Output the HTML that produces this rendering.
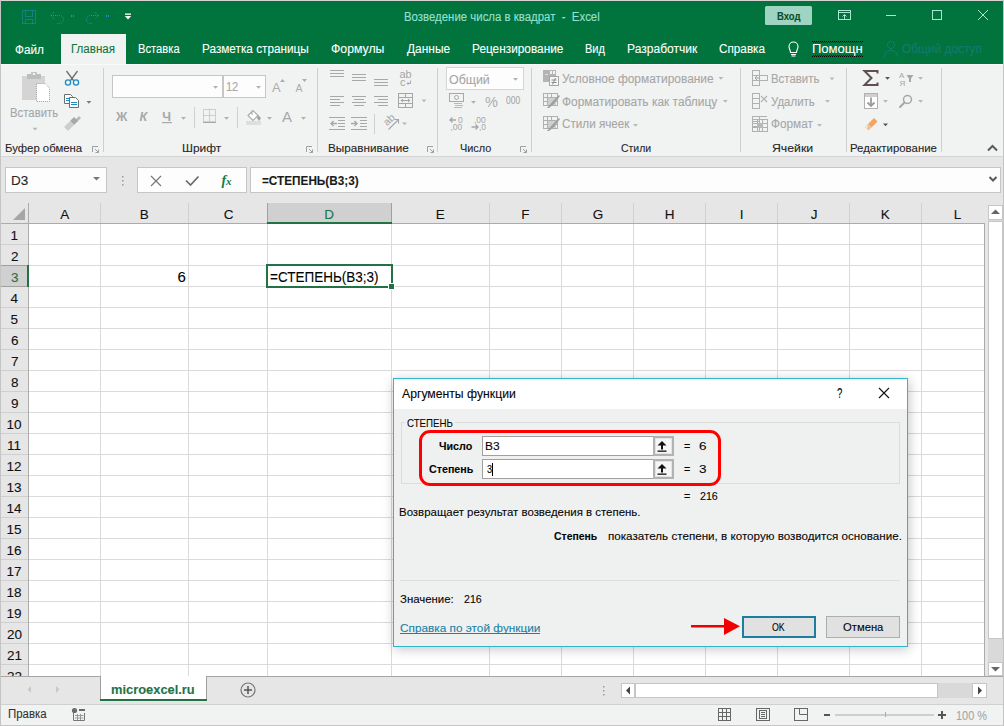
<!DOCTYPE html><html><head><meta charset="utf-8"><style>
html,body{margin:0;padding:0;width:1004px;height:726px;overflow:hidden;background:#e6e6e6}
#r{position:relative;width:1004px;height:726px;overflow:hidden;font-family:"Liberation Sans",sans-serif}
#r>div,#r>svg{position:absolute}
.t{white-space:pre;transform-origin:0 0;-webkit-text-stroke:0.1px currentColor}
</style></head><body><div id="r">
<div style="left:0px;top:0px;width:1004px;height:726px;background:#e6e6e6;"></div>
<div style="left:0px;top:0px;width:1004px;height:64px;background:#00743c;"></div>
<div style="left:61px;top:34px;width:65px;height:30px;background:#f1f3f2;"></div>
<div style="left:0px;top:64px;width:1004px;height:92px;background:#f1f3f2;"></div>
<div style="left:0px;top:64px;width:1004px;height:1px;background:#fafafa;"></div>
<div style="left:0px;top:156px;width:1004px;height:1px;background:#d4d4d4;"></div>
<div style="left:5px;top:167px;width:102px;height:26px;background:#fdfdfd;border:1px solid #c6c6c6;box-sizing:border-box"></div>
<div style="left:137px;top:167px;width:110px;height:26px;background:#fdfdfd;border:1px solid #c6c6c6;box-sizing:border-box"></div>
<div style="left:250px;top:167px;width:751px;height:26px;background:#fdfdfd;border:1px solid #c6c6c6;box-sizing:border-box"></div>
<div style="left:29px;top:224px;width:955px;height:452px;background:#ffffff;"></div>
<svg style="left:0px;top:0px;" width="1004" height="726" viewBox="0 0 1004 726"><rect x="100" y="224" width="1" height="452" fill="#dadada"/><rect x="100" y="203" width="1" height="20" fill="#d0d0d0"/><rect x="188" y="224" width="1" height="452" fill="#dadada"/><rect x="188" y="203" width="1" height="20" fill="#d0d0d0"/><rect x="267" y="224" width="1" height="452" fill="#dadada"/><rect x="267" y="203" width="1" height="20" fill="#d0d0d0"/><rect x="391" y="224" width="1" height="452" fill="#dadada"/><rect x="391" y="203" width="1" height="20" fill="#d0d0d0"/><rect x="489" y="224" width="1" height="452" fill="#dadada"/><rect x="489" y="203" width="1" height="20" fill="#d0d0d0"/><rect x="561" y="224" width="1" height="452" fill="#dadada"/><rect x="561" y="203" width="1" height="20" fill="#d0d0d0"/><rect x="633" y="224" width="1" height="452" fill="#dadada"/><rect x="633" y="203" width="1" height="20" fill="#d0d0d0"/><rect x="705" y="224" width="1" height="452" fill="#dadada"/><rect x="705" y="203" width="1" height="20" fill="#d0d0d0"/><rect x="777" y="224" width="1" height="452" fill="#dadada"/><rect x="777" y="203" width="1" height="20" fill="#d0d0d0"/><rect x="849" y="224" width="1" height="452" fill="#dadada"/><rect x="849" y="203" width="1" height="20" fill="#d0d0d0"/><rect x="921" y="224" width="1" height="452" fill="#dadada"/><rect x="921" y="203" width="1" height="20" fill="#d0d0d0"/><rect x="29" y="244" width="955" height="1" fill="#dadada"/><rect x="1" y="244" width="27" height="1" fill="#cfcfcf"/><rect x="29" y="265" width="955" height="1" fill="#dadada"/><rect x="1" y="265" width="27" height="1" fill="#cfcfcf"/><rect x="29" y="286" width="955" height="1" fill="#dadada"/><rect x="1" y="286" width="27" height="1" fill="#cfcfcf"/><rect x="29" y="307" width="955" height="1" fill="#dadada"/><rect x="1" y="307" width="27" height="1" fill="#cfcfcf"/><rect x="29" y="328" width="955" height="1" fill="#dadada"/><rect x="1" y="328" width="27" height="1" fill="#cfcfcf"/><rect x="29" y="349" width="955" height="1" fill="#dadada"/><rect x="1" y="349" width="27" height="1" fill="#cfcfcf"/><rect x="29" y="370" width="955" height="1" fill="#dadada"/><rect x="1" y="370" width="27" height="1" fill="#cfcfcf"/><rect x="29" y="391" width="955" height="1" fill="#dadada"/><rect x="1" y="391" width="27" height="1" fill="#cfcfcf"/><rect x="29" y="412" width="955" height="1" fill="#dadada"/><rect x="1" y="412" width="27" height="1" fill="#cfcfcf"/><rect x="29" y="433" width="955" height="1" fill="#dadada"/><rect x="1" y="433" width="27" height="1" fill="#cfcfcf"/><rect x="29" y="454" width="955" height="1" fill="#dadada"/><rect x="1" y="454" width="27" height="1" fill="#cfcfcf"/><rect x="29" y="475" width="955" height="1" fill="#dadada"/><rect x="1" y="475" width="27" height="1" fill="#cfcfcf"/><rect x="29" y="496" width="955" height="1" fill="#dadada"/><rect x="1" y="496" width="27" height="1" fill="#cfcfcf"/><rect x="29" y="517" width="955" height="1" fill="#dadada"/><rect x="1" y="517" width="27" height="1" fill="#cfcfcf"/><rect x="29" y="538" width="955" height="1" fill="#dadada"/><rect x="1" y="538" width="27" height="1" fill="#cfcfcf"/><rect x="29" y="559" width="955" height="1" fill="#dadada"/><rect x="1" y="559" width="27" height="1" fill="#cfcfcf"/><rect x="29" y="580" width="955" height="1" fill="#dadada"/><rect x="1" y="580" width="27" height="1" fill="#cfcfcf"/><rect x="29" y="601" width="955" height="1" fill="#dadada"/><rect x="1" y="601" width="27" height="1" fill="#cfcfcf"/><rect x="29" y="622" width="955" height="1" fill="#dadada"/><rect x="1" y="622" width="27" height="1" fill="#cfcfcf"/><rect x="29" y="643" width="955" height="1" fill="#dadada"/><rect x="1" y="643" width="27" height="1" fill="#cfcfcf"/><rect x="29" y="664" width="955" height="1" fill="#dadada"/><rect x="1" y="664" width="27" height="1" fill="#cfcfcf"/><rect x="1" y="223" width="983" height="1" fill="#ababab"/><rect x="28" y="203" width="1" height="473" fill="#ababab"/><rect x="984" y="223" width="1" height="453" fill="#ababab"/><rect x="268" y="203" width="123" height="20" fill="#d0d0d0"/><rect x="267" y="203" width="1" height="20" fill="#a0a0a0"/><rect x="391" y="203" width="1" height="20" fill="#a0a0a0"/><rect x="267" y="222" width="125" height="2" fill="#217346"/><rect x="1" y="266" width="26" height="20" fill="#d0d0d0"/><rect x="1" y="265" width="27" height="1" fill="#a0a0a0"/><rect x="1" y="286" width="27" height="1" fill="#a0a0a0"/><rect x="27" y="265" width="2" height="22" fill="#217346"/><polygon points="25,208 25,220 13,220" fill="#a6a6a6"/><rect x="267" y="265" width="125" height="22" fill="none" stroke="#217346" stroke-width="2"/><rect x="388" y="283" width="7" height="7" fill="#fff"/><rect x="389" y="284" width="5" height="5" fill="#217346"/></svg>
<div style="left:988px;top:205px;width:15px;height:471px;background:#d9d9d9;"></div>
<div style="left:988px;top:205px;width:15px;height:15px;background:#fff;border:1px solid #c6c6c6;box-sizing:border-box"></div>
<div style="left:988px;top:221px;width:15px;height:418px;background:#fff;border:1px solid #c6c6c6;box-sizing:border-box"></div>
<div style="left:988px;top:662px;width:15px;height:14px;background:#fff;border:1px solid #c6c6c6;box-sizing:border-box"></div>
<svg style="left:988px;top:205px;" width="15" height="15" viewBox="0 0 15 15"><polygon points="3,9 12,9 7.5,4.5" fill="#666"/></svg>
<svg style="left:988px;top:662px;" width="15" height="14" viewBox="0 0 15 14"><polygon points="3,5 12,5 7.5,9.5" fill="#666"/></svg>
<div style="left:1px;top:676px;width:1002px;height:1px;background:#a6a6a6;"></div>
<div style="left:100px;top:676px;width:107px;height:23px;background:#ffffff;border-left:1px solid #a0a0a0;border-right:1px solid #a0a0a0;box-sizing:border-box"></div>
<div style="left:100px;top:699px;width:107px;height:2px;background:#217346;"></div>
<div style="left:1px;top:704px;width:1002px;height:1px;background:#d0d0d0;"></div>
<div style="left:1px;top:705px;width:1002px;height:20px;background:#f1f3f2;"></div>
<div style="left:0px;top:725px;width:1004px;height:1px;background:#c6c6c6;"></div>
<div style="left:621px;top:683px;width:366px;height:15px;background:#d9d9d9;"></div>
<div style="left:621px;top:683px;width:14px;height:15px;background:#fff;border:1px solid #c6c6c6;box-sizing:border-box"></div>
<div style="left:635px;top:683px;width:303px;height:15px;background:#fff;border:1px solid #c6c6c6;box-sizing:border-box"></div>
<div style="left:972px;top:683px;width:15px;height:15px;background:#fff;border:1px solid #c6c6c6;box-sizing:border-box"></div>
<svg style="left:621px;top:683px;" width="14" height="15" viewBox="0 0 14 15"><polygon points="9,3.5 9,11.5 5,7.5" fill="#444"/></svg>
<svg style="left:972px;top:683px;" width="15" height="15" viewBox="0 0 15 15"><polygon points="6,3.5 6,11.5 10,7.5" fill="#444"/></svg>
<div style="left:0px;top:0px;width:1004px;height:1px;background:#d9d3d3;"></div>
<div style="left:0px;top:0px;width:1px;height:726px;background:#c4c4c4;"></div>
<div style="left:1003px;top:0px;width:1px;height:726px;background:#c4c4c4;"></div>
<svg style="left:0px;top:0px;" width="1004" height="726" viewBox="0 0 1004 726"><g fill="none" stroke="#2b8dbf" stroke-width="1" stroke-dasharray="1 1"><rect x="22.5" y="10.5" width="13" height="13"/><path d="M25.5 10.5V16.5H32.5V10.5"/><path d="M25.5 23.5V19.5H32.5V23.5"/><path d="M51 15.5H59.5A4 4 0 0 1 59.5 23.5H57"/><path d="M54 12L51 15.5L54 19"/><path d="M98 15.5H90.5A4 4 0 0 0 90.5 23.5H92"/><path d="M95 12L98.5 15.5L95 19"/></g><rect x="71" y="15" width="1" height="2" fill="#2b8dbf"/><rect x="73" y="15" width="1" height="2" fill="#2b8dbf"/><rect x="106" y="15" width="1" height="2" fill="#2b8dbf"/><rect x="108" y="15" width="1" height="2" fill="#2b8dbf"/><rect x="125" y="13.5" width="6" height="1.3" fill="#fff"/><polygon points="124.8,16 131.2,16 128,19.6" fill="#fff"/><rect x="765" y="6" width="47" height="19" rx="1.5" fill="#9fd3c2"/><g fill="none" stroke="#a8e6d2" stroke-width="1"><rect x="838.5" y="10.5" width="12" height="9"/><path d="M838.5 12.5H850.5"/><path d="M844.5 19.5V14.5M842.5 16.5L844.5 14.5L846.5 16.5"/><path d="M886 15.5H896"/><rect x="932.5" y="10.5" width="9" height="9"/><path d="M978 10L988 20M988 10L978 20"/></g><g fill="none" stroke="#fff" stroke-width="1.1"><path d="M790.5 52.5C790.5 50 789 49 789 46.5A4.5 4.5 0 0 1 798 46.5C798 49 796.5 50 796.5 52.5Z"/><path d="M791 54.5H796M791.5 56H795.5"/></g><path d="M812 41.5H863M812 56.5H863" fill="none" stroke="#000" stroke-width="1" stroke-dasharray="1 1"/><path d="M812 42.5H863M812 55.5H863" fill="none" stroke="#000" stroke-width="1" stroke-dasharray="1 1" stroke-dashoffset="1" opacity="0.5"/><g fill="none" stroke="#2088b8" stroke-width="1" stroke-dasharray="1 1"><circle cx="891" cy="45" r="3.5"/><path d="M884.5 56.5A6.5 6 0 0 1 897.5 56.5"/></g><rect x="22" y="76" width="23" height="24" fill="#d4d4d4"/><rect x="27" y="74" width="14" height="5" fill="#bdbdbd"/><rect x="31" y="72" width="6" height="3" fill="#c4c4c4"/><rect x="33" y="73" width="2" height="2" fill="#f1f3f2"/><path d="M36.5 83.5H45L49.5 88V101.5H36.5Z" fill="#fff" stroke="#a0a0a0" stroke-dasharray="1 1"/><polygon points="32.5,127.8 37.5,127.8 35.0,130.60000000000002" fill="#b8b8b8"/><g fill="none" stroke="#6e6e6e" stroke-width="1.3"><path d="M66.5 71L73.5 80.5M77.5 71L70.5 80.5"/></g><g fill="none" stroke="#1e8bc3" stroke-width="1.3"><circle cx="68" cy="82.5" r="2.6"/><circle cx="76" cy="82.5" r="2.6"/></g><g fill="#fff" stroke="#6e6e6e" stroke-width="1"><path d="M64.5 94.5H70.5L72.5 96.5V103.5H64.5Z"/><path d="M69.5 97.5H75.5L78.5 100.5V107.5H69.5Z"/></g><g stroke="#1e8bc3" stroke-width="1"><path d="M66 98.5H70M66 100.5H69M71 102.5H77M71 104.5H77"/></g><polygon points="86.4,101 91.4,101 88.9,103.8" fill="#7a7a7a"/><polygon points="75,120 79,116 81,118 77,122" fill="#b8b8b8"/><polygon points="70,121 74,117 78,121 74,125" fill="#a8a8a8"/><polygon points="64,127 70,121 74,125 68,131" fill="#cdcdcd"/><g fill="none" stroke="#a0a0a0" stroke-width="1"><path d="M92.5 152V146.5H98"/><path d="M95 149L98.5 152.5M98.5 149.5V152.5H95.5"/></g><g fill="none" stroke="#a0a0a0" stroke-width="1"><path d="M306.5 152V146.5H312"/><path d="M309 149L312.5 152.5M312.5 149.5V152.5H309.5"/></g><g fill="none" stroke="#a0a0a0" stroke-width="1"><path d="M427.5 152V146.5H433"/><path d="M430 149L433.5 152.5M433.5 149.5V152.5H430.5"/></g><g fill="none" stroke="#a0a0a0" stroke-width="1"><path d="M520.5 152V146.5H526"/><path d="M523 149L526.5 152.5M526.5 149.5V152.5H523.5"/></g><rect x="103" y="68" width="1" height="84" fill="#cfcfcf"/><rect x="317" y="68" width="1" height="84" fill="#cfcfcf"/><rect x="437" y="68" width="1" height="84" fill="#cfcfcf"/><rect x="531" y="68" width="1" height="84" fill="#cfcfcf"/><rect x="740" y="68" width="1" height="84" fill="#cfcfcf"/><rect x="846" y="68" width="1" height="84" fill="#cfcfcf"/><rect x="941" y="68" width="1" height="84" fill="#cfcfcf"/><rect x="112.5" y="75.5" width="110" height="22" fill="#fdfdfd" stroke="#c6c6c6"/><rect x="223.5" y="75.5" width="42" height="22" fill="#fdfdfd" stroke="#c6c6c6"/><polygon points="213,86 218,86 215.5,88.8" fill="#b0b0b0"/><polygon points="256,86 261,86 258.5,88.8" fill="#b0b0b0"/><text x="272" y="91.7" font-family="Liberation Sans" font-size="13" fill="#acacac">A</text><polygon points="280,82 285,82 282.5,79" fill="#acacac"/><text x="295.5" y="91.7" font-family="Liberation Sans" font-size="10.5" fill="#acacac">A</text><polygon points="302,79 307,79 304.5,82" fill="#acacac"/><text x="116" y="121" font-family="Liberation Sans" font-weight="bold" font-size="12.5" fill="#a8a8a8">Ж</text><text x="139.5" y="121" font-family="Liberation Sans" font-weight="bold" font-style="italic" font-size="12.5" fill="#a8a8a8">К</text><text x="162.3" y="121" font-family="Liberation Sans" font-weight="bold" font-size="12.5" fill="#a8a8a8">Ч</text><rect x="162" y="122" width="10" height="1.2" fill="#a8a8a8"/><polygon points="181,117 186,117 183.5,119.8" fill="#b0b0b0"/><rect x="194" y="107" width="1" height="21" fill="#d0d0d0"/><rect x="237" y="107" width="1" height="21" fill="#d0d0d0"/><g fill="none" stroke="#a8a8a8" stroke-dasharray="1 1"><rect x="203.5" y="109.5" width="12" height="12"/><path d="M209.5 109.5V121.5M203.5 115.5H215.5"/></g><rect x="203" y="122" width="13" height="1" fill="#a8a8a8"/><polygon points="224,117 229,117 226.5,119.8" fill="#b0b0b0"/><g fill="#fff" stroke="#a8a8a8" stroke-width="1.1"><path d="M252 110.5V115M248 115.5L253 110.5L258 115.5L253 120.5Z"/></g><polygon points="258,115 261,118 259,121 257,118" fill="#a0a0a0"/><rect x="246" y="121" width="15" height="4" fill="#dedede"/><polygon points="267,117 272,117 269.5,119.8" fill="#b0b0b0"/><text x="282" y="122" font-family="Liberation Sans" font-size="15" fill="#a8a8a8">A</text><polygon points="301,117 306,117 303.5,119.8" fill="#b0b0b0"/><rect x="330" y="70.00" width="14" height="1" fill="#a8a8a8"/><rect x="330" y="73.00" width="14" height="1" fill="#a8a8a8"/><rect x="330" y="76.00" width="14" height="1" fill="#a8a8a8"/><rect x="352" y="74.00" width="14" height="1" fill="#a8a8a8"/><rect x="352" y="77.00" width="14" height="1" fill="#a8a8a8"/><rect x="352" y="80.00" width="14" height="1" fill="#a8a8a8"/><rect x="374" y="79.00" width="14" height="1" fill="#a8a8a8"/><rect x="374" y="82.00" width="14" height="1" fill="#a8a8a8"/><rect x="374" y="85.00" width="14" height="1" fill="#a8a8a8"/><text x="399.5" y="78" font-family="Liberation Sans" font-size="11" fill="#a6a6a6">ab</text><text x="400" y="85.5" font-family="Liberation Sans" font-size="11" fill="#a6a6a6">c</text><path d="M407.5 83.5H410.5V80.5M408.5 82L407 83.5L408.5 85" fill="none" stroke="#a6a6a6"/><rect x="330" y="96.00" width="14" height="1" fill="#a8a8a8"/><rect x="330" y="99.00" width="10" height="1" fill="#a8a8a8"/><rect x="330" y="102.00" width="14" height="1" fill="#a8a8a8"/><rect x="330" y="105.00" width="10" height="1" fill="#a8a8a8"/><rect x="352" y="96.00" width="14" height="1" fill="#a8a8a8"/><rect x="354" y="99.00" width="10" height="1" fill="#a8a8a8"/><rect x="352" y="102.00" width="14" height="1" fill="#a8a8a8"/><rect x="354" y="105.00" width="10" height="1" fill="#a8a8a8"/><rect x="374" y="96.00" width="14" height="1" fill="#a8a8a8"/><rect x="378" y="99.00" width="10" height="1" fill="#a8a8a8"/><rect x="374" y="102.00" width="14" height="1" fill="#a8a8a8"/><rect x="378" y="105.00" width="10" height="1" fill="#a8a8a8"/><g fill="none" stroke="#a6a6a6"><rect x="398.5" y="93.5" width="14" height="14"/><path d="M398.5 97.5H412.5M398.5 103.5H412.5M405.5 93.5V97.5M405.5 103.5V107.5"/><path d="M401 100.5H410"/></g><polygon points="400.5,100.5 403,98.5 403,102.5" fill="#a6a6a6"/><polygon points="410.5,100.5 408,98.5 408,102.5" fill="#a6a6a6"/><polygon points="421.5,99.5 426.5,99.5 424.0,102.3" fill="#b8b8b8"/><rect x="329" y="117.00" width="16" height="1" fill="#a8a8a8"/><rect x="338" y="120.00" width="7" height="1" fill="#a8a8a8"/><rect x="338" y="123.00" width="7" height="1" fill="#a8a8a8"/><rect x="338" y="126.00" width="7" height="1" fill="#a8a8a8"/><rect x="329" y="129.00" width="16" height="1" fill="#a8a8a8"/><path d="M337 123.5H331M333.5 121L331 123.5L333.5 126" stroke="#a6a6a6" stroke-width="1.3" fill="none"/><rect x="351" y="117.00" width="16" height="1" fill="#a8a8a8"/><rect x="360" y="120.00" width="7" height="1" fill="#a8a8a8"/><rect x="360" y="123.00" width="7" height="1" fill="#a8a8a8"/><rect x="360" y="126.00" width="7" height="1" fill="#a8a8a8"/><rect x="351" y="129.00" width="16" height="1" fill="#a8a8a8"/><path d="M351 123.5H357M354.5 121L357 123.5L354.5 126" stroke="#a6a6a6" stroke-width="1.3" fill="none"/><rect x="374" y="114" width="1" height="20" fill="#d0d0d0"/><path d="M388.5 129.5L398 120M394.5 119.5H398.5V123.5" fill="none" stroke="#a6a6a6" stroke-width="1.1"/><text x="383" y="124" transform="rotate(-45 388 120)" font-family="Liberation Sans" font-size="10.5" fill="#a6a6a6">ab</text><polygon points="402,122.5 407,122.5 404.5,125.3" fill="#b8b8b8"/><rect x="446.5" y="67.5" width="77" height="22" fill="#fdfdfd" stroke="#d4d4d4"/><polygon points="513,78 518,78 515.5,80.8" fill="#b0b0b0"/><g fill="none" stroke="#a8a8a8"><rect x="449.5" y="93.5" width="14" height="8"/><circle cx="456.5" cy="97.5" r="2"/></g><g fill="#b8b8b8"><rect x="454" y="103" width="8" height="1"/><rect x="455" y="105" width="8" height="1"/><rect x="454" y="107" width="8" height="1"/></g><polygon points="471,101 476,101 473.5,103.8" fill="#b0b0b0"/><text x="485" y="107" font-family="Liberation Sans" font-size="14.5" fill="#acacac">%</text><text x="458" y="122.8" font-family="Liberation Sans" font-size="8.5" fill="#a6a6a6">0</text><text x="450.5" y="130" font-family="Liberation Sans" font-size="8.5" fill="#a6a6a6">,00</text><path d="M456 120H450M452.5 117.5L450 120L452.5 122.5" fill="none" stroke="#a6a6a6" stroke-width="1.3"/><text x="474" y="122.8" font-family="Liberation Sans" font-size="8.5" fill="#a6a6a6">,00</text><text x="479" y="130" font-family="Liberation Sans" font-size="8.5" fill="#a6a6a6">,0</text><path d="M471.5 127H478M475.5 124.5L478 127L475.5 129.5" fill="none" stroke="#a6a6a6" stroke-width="1.3"/><rect x="543" y="70" width="13" height="12" fill="#b4b4b4"/><rect x="550" y="71" width="2" height="3" fill="#f1f3f2"/><rect x="553" y="71" width="2" height="3" fill="#f1f3f2"/><rect x="545" y="74" width="3" height="1" fill="#e0e0e0"/><rect x="549.5" y="76.5" width="9" height="9" fill="#f6f6f6" stroke="#a6a6a6"/><path d="M551.5 80H556.5M551.5 82.5H556.5M555.5 78L552.5 84.5" stroke="#8c8c8c" fill="none"/><g fill="none" stroke="#b0b0b0"><rect x="543.5" y="93.5" width="14" height="12"/><path d="M543.5 97.5H557.5M543.5 101.5H557.5M547.5 93.5V105.5M551.5 93.5V105.5"/></g><rect x="548" y="98" width="8" height="7" fill="#cfcfcf"/><polygon points="547,108 552,102 559,95 560,96 554,104 549,108" fill="#a0a0a0"/><g fill="none" stroke="#b0b0b0"><rect x="543.5" y="116.5" width="14" height="12"/><path d="M543.5 120.5H557.5M543.5 124.5H557.5M547.5 116.5V128.5M551.5 116.5V128.5"/></g><rect x="548" y="121" width="8" height="7" fill="#cfcfcf"/><polygon points="547,131 552,125 559,118 560,119 554,127 549,131" fill="#a0a0a0"/><polygon points="718.4,77 723.4,77 720.9,79.8" fill="#b8b8b8"/><polygon points="722.8,100 727.8,100 725.3,102.8" fill="#b8b8b8"/><polygon points="633,124 638,124 635.5,126.8" fill="#b8b8b8"/><g fill="none" stroke="#b0b0b0"><rect x="752.5" y="70.5" width="7" height="15"/><path d="M752.5 75.5H759.5M752.5 80.5H759.5"/></g><g fill="none" stroke="#b0b0b0"><rect x="752.5" y="93.5" width="7" height="15"/><path d="M752.5 98.5H759.5M752.5 103.5H759.5"/></g><g fill="none" stroke="#b0b0b0"><rect x="752.5" y="116.5" width="7" height="15"/><path d="M752.5 121.5H759.5M752.5 126.5H759.5"/></g><rect x="759.5" y="75.5" width="8" height="5" fill="none" stroke="#b0b0b0"/><path d="M760 78H755M757 76L755 78L757 80" stroke="#a0a0a0" fill="none"/><path d="M761 96L767 102M767 96L761 102" stroke="#b0b0b0" stroke-width="1.2"/><g fill="none" stroke="#b0b0b0"><rect x="752.5" y="119.5" width="15" height="12"/><path d="M752.5 123.5H767.5M752.5 127.5H767.5M757.5 119.5V131.5M762.5 119.5V131.5"/><path d="M753 116.5H767"/></g><rect x="757" y="123" width="6" height="5" fill="#b8b8b8"/><polygon points="829.5,77.5 834.5,77.5 832.0,80.3" fill="#b8b8b8"/><polygon points="825,100 830,100 827.5,102.8" fill="#b8b8b8"/><polygon points="817,124 822,124 819.5,126.8" fill="#b8b8b8"/><path d="M877.5 73.5V71H864.5L871.5 78L864.5 85H877.5V82.5" fill="none" stroke="#5e5050" stroke-width="2"/><polygon points="885,77 890,77 887.5,79.8" fill="#555"/><text x="899" y="77.5" font-family="Liberation Sans" font-size="8" fill="#a6a6a6">А</text><text x="899.5" y="85.5" font-family="Liberation Sans" font-size="8" fill="#a6a6a6">Я</text><polygon points="906.5,75 913.5,75 911,78.5 911,82 909,82 909,78.5" fill="#a6a6a6"/><polygon points="918,77 923,77 920.5,79.8" fill="#b8b8b8"/><rect x="864.5" y="93.5" width="13" height="15" fill="#fff" stroke="#b0b0b0"/><rect x="865" y="94" width="12" height="3" fill="#cfcfcf"/><path d="M871 97.5V106M867.5 102.5L871 106L874.5 102.5" fill="none" stroke="#9a9a9a" stroke-width="1.8"/><polygon points="883,100 888,100 885.5,102.8" fill="#b8b8b8"/><circle cx="907.5" cy="99.5" r="4" fill="none" stroke="#a6a6a6" stroke-width="1.5"/><path d="M904.5 102.5L900 107" stroke="#a6a6a6" stroke-width="2" stroke-linecap="round"/><polygon points="918,100 923,100 920.5,102.8" fill="#b8b8b8"/><polygon points="868,124 874,118 877.5,121.5 871.5,127.5" fill="#f6a35e"/><polygon points="865,127 868,124 871.5,127.5 868.5,130.5" fill="#f0c090"/><rect x="866" y="126" width="1.5" height="1.5" fill="#fff"/><polygon points="883,123.5 888,123.5 885.5,126.3" fill="#555"/><path d="M988 150.5L992.5 146L997 150.5" fill="none" stroke="#5a5a5a" stroke-width="2"/></svg>
<div style="left:393px;top:378px;width:515px;height:269px;background:#eff1f0;border:1px solid #32b4cc;box-sizing:border-box;box-shadow:1px 2px 11px rgba(0,0,0,0.24)"></div>
<div style="left:394px;top:379px;width:513px;height:30px;background:#ffffff;"></div>
<div style="left:401px;top:422px;width:499px;height:62px;border:1px solid #dcdcdc;box-sizing:border-box"></div>
<div style="left:405px;top:418px;width:50px;height:8px;background:#eff1f0;"></div>
<div style="left:482px;top:436px;width:191px;height:20px;background:#fff;border:1px solid #a0a0a0;box-sizing:border-box"></div>
<div style="left:482px;top:459px;width:191px;height:20px;background:#fff;border:1px solid #a0a0a0;box-sizing:border-box"></div>
<div style="left:653px;top:436px;width:21px;height:20px;background:#f6f6f6;border:2px solid #b2b2b2;box-shadow:inset 0 0 0 1px #e4e4e4;box-sizing:border-box"></div>
<div style="left:653px;top:459px;width:21px;height:20px;background:#f6f6f6;border:2px solid #b2b2b2;box-shadow:inset 0 0 0 1px #e4e4e4;box-sizing:border-box"></div>
<div style="left:418.5px;top:430px;width:302px;height:56px;border:3px solid #ff0000;border-radius:11px;box-sizing:border-box"></div>
<div style="left:492px;top:463px;width:1px;height:13px;background:#000;"></div>
<div style="left:400px;top:580px;width:500px;height:1px;background:#dcdcdc;"></div>
<div style="left:742px;top:616px;width:74px;height:22px;background:#e1e1e1;border:2px solid #1f7ea0;box-sizing:border-box"></div>
<div style="left:826px;top:616px;width:74px;height:22px;background:#e1e1e1;border:1px solid #adadad;box-sizing:border-box"></div>
<svg style="left:688px;top:614px;" width="54" height="24" viewBox="0 0 54 24"><rect x="3" y="11" width="36" height="2.5" fill="#f00000"/><polygon points="36,4 52,12.2 36,21" fill="#f00000"/></svg>
<div style="left:400px;top:633px;width:140px;height:1px;background:#1b7fa6;"></div>
<svg style="left:0px;top:0px;" width="1004" height="726" viewBox="0 0 1004 726"><polygon points="93,177 100,177 96.5,180.5" fill="#777"/><rect x="122" y="176" width="1.5" height="1.5" fill="#9a9a9a"/><rect x="122" y="180" width="1.5" height="1.5" fill="#9a9a9a"/><rect x="122" y="184" width="1.5" height="1.5" fill="#9a9a9a"/><path d="M151 176L161 186M161 176L151 186" stroke="#777" stroke-width="1.2" fill="none"/><path d="M186 180.5L190.5 185L198.5 176.5" stroke="#6a6a6a" stroke-width="1.7" fill="none"/><text x="221.5" y="184.5" font-family="Liberation Serif" font-style="italic" font-weight="bold" font-size="14" fill="#157a45">f</text><text x="226" y="184.5" font-family="Liberation Serif" font-style="italic" font-weight="bold" font-size="11" fill="#157a45">x</text><path d="M989.5 177L993 180.5L996.5 177" stroke="#5a5a5a" stroke-width="2" fill="none"/><polygon points="31,686 31,693 27.5,689.5" fill="#c8c8c8"/><polygon points="56,686 56,693 59.5,689.5" fill="#c8c8c8"/><circle cx="248" cy="690" r="7" fill="none" stroke="#777" stroke-width="1.2"/><path d="M244 690H252M248 686V694" stroke="#555" stroke-width="1.5"/><rect x="603" y="686" width="1.5" height="1.5" fill="#9a9a9a"/><rect x="603" y="690" width="1.5" height="1.5" fill="#9a9a9a"/><rect x="603" y="694" width="1.5" height="1.5" fill="#9a9a9a"/><circle cx="74.5" cy="710.5" r="2.6" fill="#6a6a6a"/><rect x="79" y="709" width="6" height="2" fill="#6a6a6a"/><g fill="none" stroke="#777"><path d="M73.5 713V720.5H84.5V713"/><path d="M75 715.5H83.5M75 718H83.5M77.5 714V720M80.5 714V720" stroke="#9a9a9a"/></g><g fill="none" stroke="#666"><rect x="718.5" y="708.5" width="12" height="12"/><path d="M718.5 712.5H730.5M718.5 716.5H730.5M722.5 708.5V720.5M726.5 708.5V720.5"/><rect x="756.5" y="708.5" width="13" height="12"/><rect x="759.5" y="710.5" width="7" height="8"/><path d="M761 712.5H765M761 714.5H765M761 716.5H765"/><rect x="794.5" y="708.5" width="13" height="12"/><path d="M799.5 708.5V714.5H807.5"/></g><rect x="824" y="714" width="6" height="2" fill="#555"/><rect x="835" y="714.5" width="99" height="1" fill="#aaa"/><rect x="885" y="712" width="1" height="5" fill="#aaa"/><rect x="938" y="714" width="8" height="2" fill="#555"/><rect x="941" y="711" width="2" height="8" fill="#555"/><path d="M879 388L889 398M889 388L879 398" stroke="#111" stroke-width="1.1" fill="none"/><polygon points="662,441 666.5,445.5 657.5,445.5" fill="#111"/><rect x="661" y="445" width="2" height="4.5" fill="#111"/><rect x="657.5" y="450.5" width="9" height="1.3" fill="#111"/><polygon points="662,464 666.5,468.5 657.5,468.5" fill="#111"/><rect x="661" y="468" width="2" height="4.5" fill="#111"/><rect x="657.5" y="473.5" width="9" height="1.3" fill="#111"/></svg>
<div class="t" style="left:403.59px;top:11.00px;font-size:12.5px;line-height:12.5px;font-weight:normal;color:#98e0d4;transform:scaleX(0.9131);">Возведение числа в квадрат  -  Excel</div>
<div class="t" style="left:777.00px;top:11.00px;font-size:11.5px;line-height:11.5px;font-weight:bold;color:#084d2b;transform:scaleX(0.8276);">Вход</div>
<div class="t" style="left:15.40px;top:44.00px;font-size:12.5px;line-height:12.5px;font-weight:normal;color:#ffffff;transform:scaleX(0.9400);">Файл</div>
<div class="t" style="left:70.58px;top:43.00px;font-size:12.5px;line-height:12.5px;font-weight:normal;color:#0b7640;transform:scaleX(0.9239);">Главная</div>
<div class="t" style="left:137.80px;top:43.00px;font-size:12.5px;line-height:12.5px;font-weight:normal;color:#ffffff;transform:scaleX(0.8978);">Вставка</div>
<div class="t" style="left:201.56px;top:43.00px;font-size:12.5px;line-height:12.5px;font-weight:normal;color:#ffffff;transform:scaleX(0.9420);">Разметка страницы</div>
<div class="t" style="left:331.00px;top:43.00px;font-size:12.5px;line-height:12.5px;font-weight:normal;color:#ffffff;transform:scaleX(0.9815);">Формулы</div>
<div class="t" style="left:407.00px;top:43.00px;font-size:12.5px;line-height:12.5px;font-weight:normal;color:#ffffff;transform:scaleX(0.9556);">Данные</div>
<div class="t" style="left:471.55px;top:43.00px;font-size:12.5px;line-height:12.5px;font-weight:normal;color:#ffffff;transform:scaleX(0.9474);">Рецензирование</div>
<div class="t" style="left:584.82px;top:43.00px;font-size:12.5px;line-height:12.5px;font-weight:normal;color:#ffffff;transform:scaleX(0.8818);">Вид</div>
<div class="t" style="left:626.53px;top:43.00px;font-size:12.5px;line-height:12.5px;font-weight:normal;color:#ffffff;transform:scaleX(0.9653);">Разработчик</div>
<div class="t" style="left:719.00px;top:43.00px;font-size:12.5px;line-height:12.5px;font-weight:normal;color:#ffffff;transform:scaleX(0.9388);">Справка</div>
<div class="t" style="left:811.96px;top:43.00px;font-size:12.5px;line-height:12.5px;font-weight:normal;color:#ffffff;transform:scaleX(1.0426);">Помощн</div>
<div class="t" style="left:902.00px;top:43.00px;font-size:12.5px;line-height:12.5px;font-weight:normal;color:#177a70;transform:scaleX(0.9524);">Общий доступ</div>
<div class="t" style="left:4.71px;top:143.00px;font-size:11.5px;line-height:11.5px;font-weight:normal;color:#262626;transform:scaleX(0.9870);">Буфер обмена</div>
<div class="t" style="left:182.26px;top:143.00px;font-size:11.5px;line-height:11.5px;font-weight:normal;color:#262626;transform:scaleX(1.0351);">Шрифт</div>
<div class="t" style="left:328.18px;top:143.00px;font-size:11.5px;line-height:11.5px;font-weight:normal;color:#262626;transform:scaleX(1.0205);">Выравнивание</div>
<div class="t" style="left:459.75px;top:143.00px;font-size:11.5px;line-height:11.5px;font-weight:normal;color:#262626;transform:scaleX(0.9469);">Число</div>
<div class="t" style="left:621.00px;top:143.00px;font-size:11.5px;line-height:11.5px;font-weight:normal;color:#262626;transform:scaleX(0.9091);">Стили</div>
<div class="t" style="left:772.23px;top:143.00px;font-size:11.5px;line-height:11.5px;font-weight:normal;color:#262626;transform:scaleX(1.0676);">Ячейки</div>
<div class="t" style="left:849.71px;top:143.00px;font-size:11.5px;line-height:11.5px;font-weight:normal;color:#262626;transform:scaleX(0.9920);">Редактирование</div>
<div class="t" style="left:9.59px;top:107.00px;font-size:12.5px;line-height:12.5px;font-weight:normal;color:#a6a6a6;transform:scaleX(0.9096);">Вставить</div>
<div class="t" style="left:225.72px;top:81.00px;font-size:12.5px;line-height:12.5px;font-weight:normal;color:#a6a6a6;transform:scaleX(0.8769);">12</div>
<div class="t" style="left:449.00px;top:73.00px;font-size:13px;line-height:13px;font-weight:normal;color:#a6a6a6;transform:scaleX(0.9524);">Общий</div>
<div class="t" style="left:562.40px;top:73.00px;font-size:12.5px;line-height:12.5px;font-weight:normal;color:#a6a6a6;transform:scaleX(0.9535);">Условное форматирование</div>
<div class="t" style="left:562.40px;top:96.00px;font-size:12.5px;line-height:12.5px;font-weight:normal;color:#a6a6a6;transform:scaleX(0.9546);">Форматировать как таблицу</div>
<div class="t" style="left:562.40px;top:118.00px;font-size:12.5px;line-height:12.5px;font-weight:normal;color:#a6a6a6;transform:scaleX(0.9347);">Стили ячеек</div>
<div class="t" style="left:771.09px;top:73.00px;font-size:12.5px;line-height:12.5px;font-weight:normal;color:#a6a6a6;transform:scaleX(0.9135);">Вставить</div>
<div class="t" style="left:771.00px;top:96.00px;font-size:12.5px;line-height:12.5px;font-weight:normal;color:#a6a6a6;transform:scaleX(0.9167);">Удалить</div>
<div class="t" style="left:771.00px;top:118.00px;font-size:12.5px;line-height:12.5px;font-weight:normal;color:#a6a6a6;transform:scaleX(0.9422);">Формат</div>
<div class="t" style="left:505.60px;top:96.00px;font-size:10px;line-height:10px;font-weight:normal;color:#a6a6a6;transform:scaleX(0.8471);">000</div>
<div class="t" style="left:10.92px;top:175.00px;font-size:12.5px;line-height:12.5px;font-weight:normal;color:#262626;transform:scaleX(1.0800);">D3</div>
<div class="t" style="left:262.30px;top:175.00px;font-size:12px;line-height:12px;font-weight:bold;color:#1a1a1a;transform:scaleX(0.9798);">=СТЕПЕНЬ(B3;3)</div>
<div class="t" style="left:60.20px;top:208.00px;font-size:13.5px;line-height:13.5px;font-weight:normal;color:#111;">A</div>
<div class="t" style="left:139.70px;top:208.00px;font-size:13.5px;line-height:13.5px;font-weight:normal;color:#111;">B</div>
<div class="t" style="left:223.70px;top:208.00px;font-size:13.5px;line-height:13.5px;font-weight:normal;color:#111;">C</div>
<div class="t" style="left:324.20px;top:208.00px;font-size:13.5px;line-height:13.5px;font-weight:normal;color:#217346;">D</div>
<div class="t" style="left:435.70px;top:208.00px;font-size:13.5px;line-height:13.5px;font-weight:normal;color:#111;">E</div>
<div class="t" style="left:521.20px;top:208.00px;font-size:13.5px;line-height:13.5px;font-weight:normal;color:#111;">F</div>
<div class="t" style="left:592.70px;top:208.00px;font-size:13.5px;line-height:13.5px;font-weight:normal;color:#111;">G</div>
<div class="t" style="left:664.70px;top:208.00px;font-size:13.5px;line-height:13.5px;font-weight:normal;color:#111;">H</div>
<div class="t" style="left:739.70px;top:208.00px;font-size:13.5px;line-height:13.5px;font-weight:normal;color:#111;">I</div>
<div class="t" style="left:810.70px;top:208.00px;font-size:13.5px;line-height:13.5px;font-weight:normal;color:#111;">J</div>
<div class="t" style="left:880.70px;top:208.00px;font-size:13.5px;line-height:13.5px;font-weight:normal;color:#111;">K</div>
<div class="t" style="left:953.70px;top:208.00px;font-size:13.5px;line-height:13.5px;font-weight:normal;color:#111;">L</div>
<div class="t" style="left:10.50px;top:229.00px;font-size:13.5px;line-height:13.5px;font-weight:normal;color:#111;">1</div>
<div class="t" style="left:11.00px;top:250.00px;font-size:13.5px;line-height:13.5px;font-weight:normal;color:#111;">2</div>
<div class="t" style="left:11.00px;top:271.00px;font-size:13.5px;line-height:13.5px;font-weight:normal;color:#217346;">3</div>
<div class="t" style="left:10.50px;top:292.00px;font-size:13.5px;line-height:13.5px;font-weight:normal;color:#111;">4</div>
<div class="t" style="left:10.50px;top:313.00px;font-size:13.5px;line-height:13.5px;font-weight:normal;color:#111;">5</div>
<div class="t" style="left:11.00px;top:334.00px;font-size:13.5px;line-height:13.5px;font-weight:normal;color:#111;">6</div>
<div class="t" style="left:11.00px;top:355.00px;font-size:13.5px;line-height:13.5px;font-weight:normal;color:#111;">7</div>
<div class="t" style="left:11.00px;top:376.00px;font-size:13.5px;line-height:13.5px;font-weight:normal;color:#111;">8</div>
<div class="t" style="left:11.00px;top:397.00px;font-size:13.5px;line-height:13.5px;font-weight:normal;color:#111;">9</div>
<div class="t" style="left:6.50px;top:418.00px;font-size:13.5px;line-height:13.5px;font-weight:normal;color:#111;">10</div>
<div class="t" style="left:7.00px;top:439.00px;font-size:13.5px;line-height:13.5px;font-weight:normal;color:#111;">11</div>
<div class="t" style="left:6.50px;top:460.00px;font-size:13.5px;line-height:13.5px;font-weight:normal;color:#111;">12</div>
<div class="t" style="left:6.50px;top:481.00px;font-size:13.5px;line-height:13.5px;font-weight:normal;color:#111;">13</div>
<div class="t" style="left:6.50px;top:502.00px;font-size:13.5px;line-height:13.5px;font-weight:normal;color:#111;">14</div>
<div class="t" style="left:6.50px;top:523.00px;font-size:13.5px;line-height:13.5px;font-weight:normal;color:#111;">15</div>
<div class="t" style="left:6.50px;top:544.00px;font-size:13.5px;line-height:13.5px;font-weight:normal;color:#111;">16</div>
<div class="t" style="left:6.50px;top:565.00px;font-size:13.5px;line-height:13.5px;font-weight:normal;color:#111;">17</div>
<div class="t" style="left:6.50px;top:586.00px;font-size:13.5px;line-height:13.5px;font-weight:normal;color:#111;">18</div>
<div class="t" style="left:6.50px;top:607.00px;font-size:13.5px;line-height:13.5px;font-weight:normal;color:#111;">19</div>
<div class="t" style="left:7.00px;top:628.00px;font-size:13.5px;line-height:13.5px;font-weight:normal;color:#111;">20</div>
<div class="t" style="left:7.00px;top:649.00px;font-size:13.5px;line-height:13.5px;font-weight:normal;color:#111;">21</div>
<div class="t" style="height:6px;overflow:hidden;left:7.00px;top:670.00px;font-size:13.5px;line-height:13.5px;font-weight:normal;color:#111;">22</div>
<div class="t" style="left:177.40px;top:269.00px;font-size:15px;line-height:15px;font-weight:normal;color:#000;">6</div>
<div class="t" style="left:270.30px;top:269.00px;font-size:15px;line-height:15px;font-weight:normal;color:#000;transform:scaleX(0.9000);">=СТЕПЕНЬ(B3;3)</div>
<div class="t" style="left:402.40px;top:388.00px;font-size:12.5px;line-height:12.5px;font-weight:normal;color:#050505;transform:scaleX(0.9767);">Аргументы функции</div>
<div class="t" style="left:836.50px;top:386.00px;font-size:14px;line-height:14px;font-weight:normal;color:#050505;transform:scaleX(0.6875);">?</div>
<div class="t" style="left:406.60px;top:418.00px;font-size:11.5px;line-height:11.5px;font-weight:normal;color:#050505;transform:scaleX(0.8444);">СТЕПЕНЬ</div>
<div class="t" style="left:439.30px;top:441.00px;font-size:11.5px;line-height:11.5px;font-weight:bold;color:#050505;transform:scaleX(0.9306);">Число</div>
<div class="t" style="left:429.10px;top:464.00px;font-size:11.5px;line-height:11.5px;font-weight:bold;color:#050505;transform:scaleX(0.9298);">Степень</div>
<div class="t" style="left:485.42px;top:441.00px;font-size:11px;line-height:11px;font-weight:normal;color:#050505;transform:scaleX(1.0833);">B3</div>
<div class="t" style="left:486.50px;top:464.00px;font-size:11px;line-height:11px;font-weight:normal;color:#050505;transform:scaleX(0.8333);">3</div>
<div class="t" style="left:683.50px;top:441.00px;font-size:11.5px;line-height:11.5px;font-weight:normal;color:#050505;transform:scaleX(0.9286);">=</div>
<div class="t" style="left:699.40px;top:441.00px;font-size:11.5px;line-height:11.5px;font-weight:normal;color:#050505;transform:scaleX(1.1667);">6</div>
<div class="t" style="left:683.50px;top:464.00px;font-size:11.5px;line-height:11.5px;font-weight:normal;color:#050505;transform:scaleX(0.9286);">=</div>
<div class="t" style="left:699.40px;top:464.00px;font-size:11.5px;line-height:11.5px;font-weight:normal;color:#050505;transform:scaleX(1.1667);">3</div>
<div class="t" style="left:683.50px;top:491.00px;font-size:11.5px;line-height:11.5px;font-weight:normal;color:#050505;transform:scaleX(0.9286);">=</div>
<div class="t" style="left:700.00px;top:491.00px;font-size:11.5px;line-height:11.5px;font-weight:normal;color:#050505;transform:scaleX(0.9263);">216</div>
<div class="t" style="left:399.41px;top:507.00px;font-size:11.5px;line-height:11.5px;font-weight:normal;color:#050505;transform:scaleX(0.9942);">Возвращает результат возведения в степень.</div>
<div class="t" style="left:554.40px;top:531.00px;font-size:11.5px;line-height:11.5px;font-weight:bold;color:#050505;transform:scaleX(0.9064);">Степень</div>
<div class="t" style="left:607.50px;top:531.00px;font-size:11.5px;line-height:11.5px;font-weight:normal;color:#050505;transform:scaleX(1.0121);">показатель степени, в которую возводится основание.</div>
<div class="t" style="left:400.00px;top:594.00px;font-size:11.5px;line-height:11.5px;font-weight:normal;color:#050505;transform:scaleX(0.9907);">Значение:</div>
<div class="t" style="left:464.30px;top:594.00px;font-size:11.5px;line-height:11.5px;font-weight:normal;color:#050505;transform:scaleX(0.9211);">216</div>
<div class="t" style="left:400.00px;top:623.00px;font-size:11.5px;line-height:11.5px;font-weight:normal;color:#1b7fa6;transform:scaleX(1.0265);">Справка по этой функции</div>
<div class="t" style="left:772.00px;top:622.00px;font-size:11.5px;line-height:11.5px;font-weight:normal;color:#050505;transform:scaleX(0.7647);">OK</div>
<div class="t" style="left:842.60px;top:622.00px;font-size:11.5px;line-height:11.5px;font-weight:normal;color:#050505;transform:scaleX(0.9780);">Отмена</div>
<div class="t" style="left:111.41px;top:683.00px;font-size:13px;line-height:13px;font-weight:bold;color:#217346;transform:scaleX(0.9904);">microexcel.ru</div>
<div class="t" style="left:7.59px;top:708.00px;font-size:12.5px;line-height:12.5px;font-weight:normal;color:#333;transform:scaleX(0.9146);">Правка</div>
<div class="t" style="left:956.43px;top:710.00px;font-size:12.5px;line-height:12.5px;font-weight:normal;color:#a6a6a6;transform:scaleX(0.8735);">100 %</div>
</div></body></html>
